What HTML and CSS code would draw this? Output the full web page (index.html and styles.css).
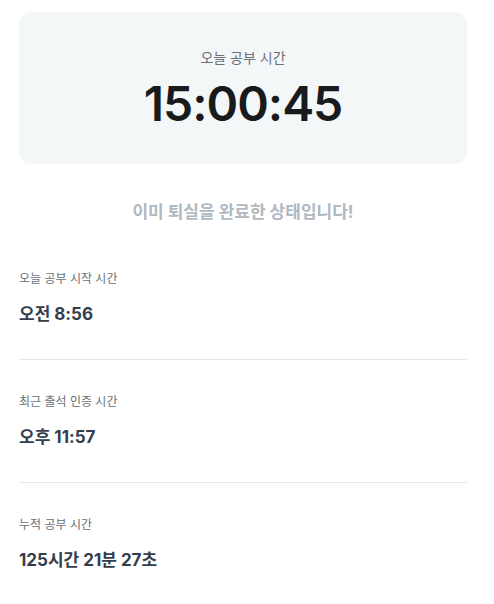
FILE: index.html
```html
<!DOCTYPE html>
<html lang="ko">
    <head>
        <meta charset="UTF-8">
        <meta name="viewport" content="width=device-width, initial-scale=1.0">
        <title>공부 시간</title>
        <link rel="stylesheet" href="styles.css">
    </head>
<body>
    <div id="page">
        <div class="timer-card">
            <p class="timer-label">오늘 공부 시간</p>
            <p class="timer-value">15:00:45</p>
        </div>

        <p class="status">이미 퇴실을 완료한 상태입니다!</p>

        <div class="info-row">
            <p class="info-label">오늘 공부 시작 시간</p>
            <p class="info-value">오전 8:56</p>
        </div>
        <div class="info-row">
            <p class="info-label">최근 출석 인증 시간</p>
            <p class="info-value">오후 11:57</p>
        </div>
        <div class="info-row last">
            <p class="info-label">누적 공부 시간</p>
            <p class="info-value">125시간 21분 27초</p>
        </div>
    </div>
</body>
</html>
```

FILE: styles.css
```css
body {
    font-family: Inter, "Noto Sans CJK KR", sans-serif;
    background-color: #fff;
    margin: 0;
    padding: 0;
}

#page {
    width: 448px;
    padding: 12px 27px 0 19px;
}

p {
    margin: 0;
}

.timer-card {
    background-color: #f4f7f8;
    border-radius: 12px;
    height: 152px;
    box-sizing: border-box;
    padding-top: 6px;
    display: flex;
    flex-direction: column;
    align-items: center;
    justify-content: center;
    gap: 6px;
}

.timer-label {
    font-size: 14px;
    color: #6b7076;
    line-height: 20px;
}

.timer-value {
    font-size: 48px;
    font-weight: 600;
    color: #191a1c;
    line-height: 60px;
    letter-spacing: -1px;
}

.status {
    text-align: center;
    font-size: 17px;
    font-weight: 700;
    color: #b0b8c1;
    line-height: 24px;
    margin: 36px 0 13px;
}

.info-row {
    border-bottom: 1px solid #e5e8eb;
    padding: 33px 0 33px;
}

.info-row.last {
    border-bottom: none;
}

.info-label {
    font-size: 12px;
    color: #6b7076;
    line-height: 18px;
}

.info-value {
    font-size: 17px;
    font-weight: 700;
    color: #333d4b;
    line-height: 24px;
    margin-top: 14px;
}
```
